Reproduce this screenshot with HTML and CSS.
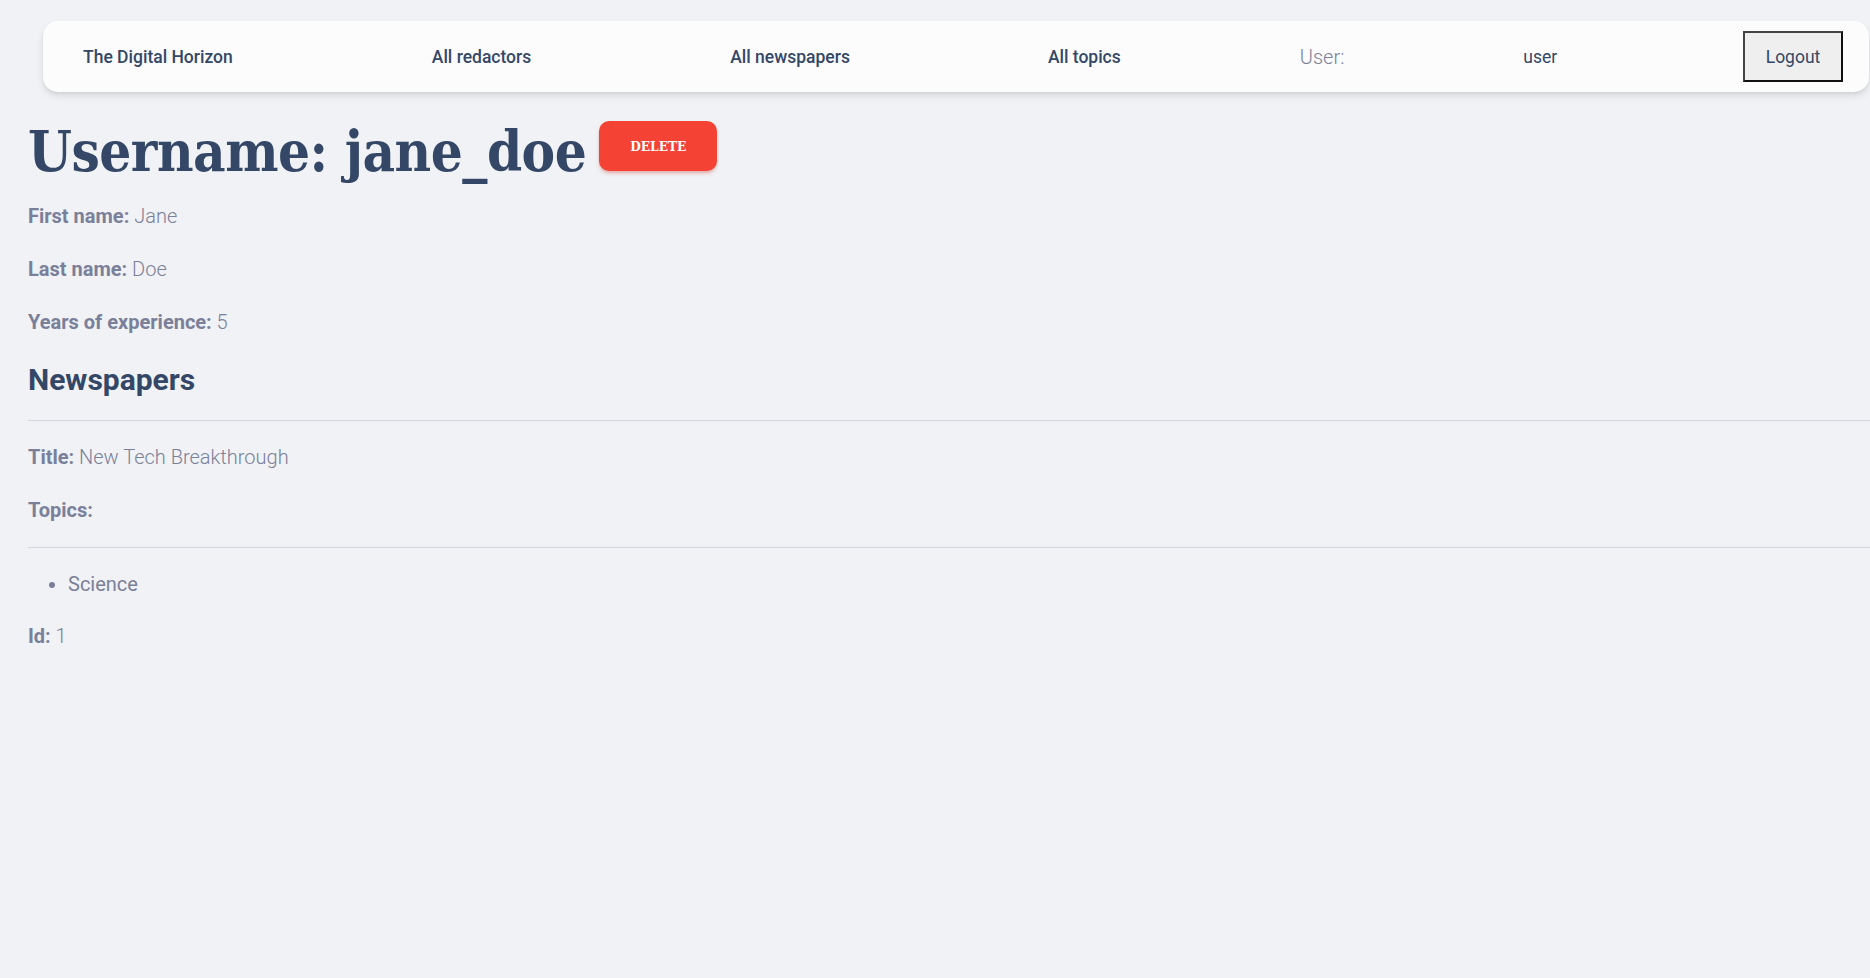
FILE: index.html
```html
<!DOCTYPE html>
<html lang="en">
<head>
<meta charset="utf-8">
<title>Redactor: jane_doe</title>
<link rel="stylesheet" href="styles.css">
</head>
<body>
<header class="navbar">
  <a class="nav-brand" href="#">The Digital Horizon</a>
  <a class="nav-link" href="#">All redactors</a>
  <a class="nav-link" href="#">All newspapers</a>
  <a class="nav-link nav-link-3" href="#">All topics</a>
  <span class="nav-user-label">User:</span>
  <span class="nav-user-name">user</span>
  <button class="btn-logout" type="button">Logout</button>
</header>
<main class="content">
  <div class="title-row">
    <h1 class="page-title">Username: jane_doe</h1>
    <button class="btn-delete" type="button">Delete</button>
  </div>
  <p class="field"><strong>First name:</strong> Jane</p>
  <p class="field"><strong>Last name:</strong> Doe</p>
  <p class="field"><strong>Years of experience:</strong> 5</p>
  <h4 class="section-title">Newspapers</h4>
  <hr class="divider">
  <p class="field"><strong>Title:</strong> New Tech Breakthrough</p>
  <p class="field"><strong>Topics:</strong></p>
  <hr class="divider">
  <ul class="topic-list">
    <li>Science</li>
  </ul>
  <p class="field"><strong>Id:</strong> 1</p>
</main>
</body>
</html>
```

FILE: styles.css
```css
* { box-sizing: border-box; }

html, body {
  margin: 0;
  padding: 0;
}

body {
  background: #f0f2f5;
  font-family: Roboto, "Liberation Sans", sans-serif;
  color: #7b809a;
  overflow-x: hidden;
}

.navbar {
  display: flex;
  align-items: center;
  height: 71px;
  margin: 21px 1px 0 43px;
  padding: 0 26px 0 40px;
  background: #fcfcfd;
  border-radius: 15px;
  box-shadow: 0 4px 8px -1px rgba(0, 0, 0, 0.12), 0 2px 4px -1px rgba(0, 0, 0, 0.06);
}

.nav-brand,
.nav-link {
  font-size: 17.5px;
  font-weight: 500;
  color: #344767;
  text-decoration: none;
  white-space: nowrap;
}

.nav-link { margin-left: 199px; }
.nav-link-3 { margin-left: 198px; }

.nav-user-label {
  margin-left: 179px;
  font-size: 20px;
  font-weight: 300;
  color: #7b809a;
}

.nav-user-name {
  margin-left: 179px;
  font-size: 17.5px;
  font-weight: 400;
  color: #344767;
}

.btn-logout {
  margin-left: auto;
  width: 100px;
  height: 51px;
  background: #efefef;
  border: 2px solid #111;
  border-top-color: #444;
  border-left-color: #444;
  font-family: Roboto, "Liberation Sans", sans-serif;
  font-size: 17.5px;
  color: #344767;
  padding: 0;
}

.content {
  padding-left: 28px;
}

.title-row {
  display: flex;
  align-items: flex-start;
  margin-top: 22px;
}

.page-title {
  margin: 0 0 11px 0;
  font-family: "DejaVu Serif", serif;
  font-stretch: condensed;
  font-weight: 700;
  font-size: 56px;
  line-height: 75px;
  letter-spacing: -0.5px;
  color: #344767;
  white-space: nowrap;
}

.btn-delete {
  margin: 7px 0 0 13px;
  width: 118px;
  height: 50px;
  background: #f44335;
  border: 0;
  border-radius: 10px;
  box-shadow: 0 3px 4px -1px rgba(244, 67, 53, 0.35), 0 2px 2px rgba(0, 0, 0, 0.08);
  color: #ffffff;
  font-family: "DejaVu Serif", serif;
  font-stretch: condensed;
  font-weight: 700;
  font-size: 13.5px;
  text-transform: uppercase;
  padding: 0;
}

.field {
  margin: 0 0 20px 0;
  font-size: 20px;
  line-height: 33px;
  font-weight: 300;
  color: #7b809a;
}

.field strong { font-weight: 700; }

.section-title {
  margin: 20px 0 20px 0;
  font-size: 30px;
  line-height: 41px;
  font-weight: 700;
  color: #344767;
}

.divider {
  height: 1px;
  margin: 0 0 20px 0;
  border: 0;
  background: #d5d7de;
}

.topic-list {
  margin: 0 0 20px 0;
  padding-left: 40px;
  font-size: 20px;
  line-height: 32px;
  font-weight: 400;
  color: #7b809a;
}
```
